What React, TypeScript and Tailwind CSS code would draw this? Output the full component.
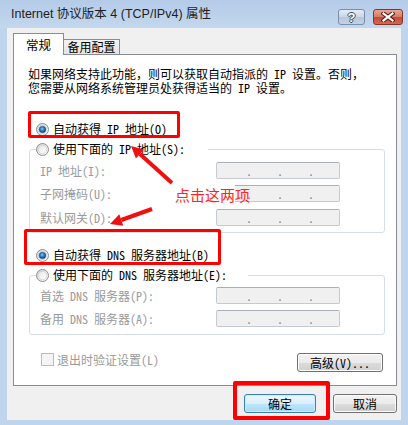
import React from "react";

const cn = "font-['Noto_Sans_Mono_CJK_SC','Noto_Sans_CJK_SC',sans-serif]";

function Radio({ on }: { on?: boolean }) {
  return (
    <svg width="13" height="13" viewBox="0 0 13 13" className="shrink-0">
      <defs>
        <linearGradient id="rOuter" x1="0" y1="0" x2="1" y2="1">
          <stop offset="0" stopColor="#d4d4d4" />
          <stop offset="1" stopColor="#fdfdfd" />
        </linearGradient>
        <linearGradient id="rInner" x1="0" y1="0" x2="1" y2="1">
          <stop offset="0" stopColor="#e6e6e6" />
          <stop offset="1" stopColor="#ffffff" />
        </linearGradient>
        <radialGradient id="rDot" cx="0.45" cy="0.4" r="0.6">
          <stop offset="0" stopColor="#8fd0fa" />
          <stop offset="0.5" stopColor="#2b78c4" />
          <stop offset="1" stopColor="#0d3f7a" />
        </radialGradient>
      </defs>
      <circle cx="6.5" cy="6.5" r="6" fill="url(#rOuter)" stroke="#8e8f8f" strokeWidth="1" />
      <circle cx="6.5" cy="6.5" r="4.2" fill="url(#rInner)" stroke="#c9c9c9" strokeWidth="0.6" />
      {on && <circle cx="6.5" cy="6.5" r="3.3" fill="url(#rDot)" stroke="#1b4f86" strokeWidth="0.5" />}
    </svg>
  );
}

function IpBox() {
  return (
    <div className="flex h-[17px] w-[124px] items-center rounded-[2px] border border-[#c5cad1] border-t-[#abb0b6] bg-[#f0f0f0] text-[12px] leading-none text-[#8a8a8a]">
      <span className="ml-[29px] w-[6px] text-center">.</span>
      <span className="ml-[25px] w-[6px] text-center">.</span>
      <span className="ml-[25px] w-[6px] text-center">.</span>
    </div>
  );
}

function Field({ label, mt }: { label: string; mt: string }) {
  return (
    <div className={`flex h-[17px] items-center pl-[10px] ${mt}`}>
      <span className="w-[176px] shrink-0 text-[#9a9a9a]">{label}</span>
      <IpBox />
    </div>
  );
}

function WinButton({ children, primary, className = "" }: { children: React.ReactNode; primary?: boolean; className?: string }) {
  return (
    <div
      className={`flex h-[19px] items-center justify-center rounded-[3px] border text-[12px] text-black ${
        primary
          ? "border-[#3c7fb1] bg-[linear-gradient(#eaf6fd_0%,#d9f0fc_50%,#bee6fd_50%,#a7d9f5_100%)] shadow-[inset_0_0_0_1px_#c9ecff]"
          : "border-[#707070] bg-[linear-gradient(#f2f2f2_0%,#ebebeb_50%,#dddddd_50%,#cfcfcf_100%)] shadow-[inset_0_0_0_1px_#fcfcfc]"
      } ${className}`}
    >
      {children}
    </div>
  );
}

export default function App() {
  return (
    <div className={`relative flex h-[425px] w-[408px] flex-col overflow-hidden bg-[#bfd4ed] ${cn} text-[12px] text-black`}>
      {/* title bar */}
      <div className="flex h-[28px] shrink-0 bg-[linear-gradient(#b4cbe8,#c3d7ee)] pl-[11px] pr-[5px]">
        <span className="mt-[6px] flex-1 font-['Liberation_Sans','Noto_Sans_CJK_SC',sans-serif] text-[12.5px] leading-[16px] text-[#1e1e1e]">
          Internet 协议版本 4 (TCP/IPv4) 属性
        </span>
        <div className="mt-[9px] flex h-[16px] w-[27px] items-center justify-center rounded-[3px] border border-[#7b8ea8] bg-[linear-gradient(#e4ecf6,#c9d7e8_50%,#b5c7dd_50%,#c3d3e6)]">
          <span className="font-['Liberation_Sans',sans-serif] text-[13px] font-bold leading-none text-white [text-shadow:1px_0_#3d4b63,-1px_0_#3d4b63,0_1px_#3d4b63,0_-1px_#3d4b63]">
            ?
          </span>
        </div>
        <div className="ml-[8px] mt-[9px] flex h-[16px] w-[30px] items-center justify-center rounded-[3px] border border-[#8c3326] bg-[linear-gradient(#e8a595,#d77a68_50%,#c24a36_50%,#cf6a55)]">
          <svg width="14" height="10" viewBox="0 0 14 10">
            <path d="M2.5 1.5 L11.5 8.5 M11.5 1.5 L2.5 8.5" stroke="#5b1e14" strokeWidth="4.2" strokeLinecap="square" />
            <path d="M2.5 1.5 L11.5 8.5 M11.5 1.5 L2.5 8.5" stroke="#ffffff" strokeWidth="2.2" strokeLinecap="square" />
          </svg>
        </div>
      </div>

      {/* dialog body */}
      <div className="mx-[7px] flex h-[392px] shrink-0 flex-col bg-[#f0f0f0] pl-[6px] pr-[4px] pt-[5px]">
        {/* tabs */}
        <div className="flex h-[21px] items-end">
          <div className="relative z-10 -mb-px flex h-[22px] w-[51px] justify-center border-x border-t border-[#898c95] bg-white pt-[3px] text-[12.5px] leading-[16px]">
            常规
          </div>
          <div className="flex h-[15px] w-[56px] items-center justify-center border-r border-t border-[#898c95] bg-[linear-gradient(#f2f2f2,#e4e4e4)] leading-none">
            备用配置
          </div>
        </div>

        {/* tab page */}
        <div className="flex h-[332px] flex-col border border-[#898c95] bg-white pl-[14px] pr-[11px] pt-[12px]">
          <p className="leading-[14px]">
            如果网络支持此功能，则可以获取自动指派的 IP 设置。否则，
            <br />
            您需要从网络系统管理员处获得适当的 IP 设置。
          </p>

          <div className="mt-[26px] flex h-[16px] items-center gap-[4px] pl-[8px]">
            <Radio on />
            <span>自动获得 IP 地址(O)</span>
          </div>

          <div className="ml-[1px] mt-[12px] rounded-[3px] border border-[#d5dfe5] pb-[6px]">
            <div className="ml-[6px] -mt-[9px] flex h-[16px] w-[172px] items-center gap-[4px] bg-white">
              <Radio />
              <span>使用下面的 IP 地址(S):</span>
            </div>
            <Field label="IP 地址(I):" mt="mt-[5px]" />
            <Field label="子网掩码(U):" mt="mt-[6px]" />
            <Field label="默认网关(D):" mt="mt-[7px]" />
          </div>

          <div className="mt-[14px] flex h-[16px] items-center gap-[4px] pl-[8px]">
            <Radio on />
            <span>自动获得 DNS 服务器地址(B)</span>
          </div>

          <div className="ml-[1px] mt-[12px] rounded-[3px] border border-[#d5dfe5] pb-[7px]">
            <div className="ml-[6px] -mt-[9px] flex h-[16px] w-[212px] items-center gap-[4px] bg-white">
              <Radio />
              <span>使用下面的 DNS 服务器地址(E):</span>
            </div>
            <Field label="首选 DNS 服务器(P):" mt="mt-[4px]" />
            <Field label="备用 DNS 服务器(A):" mt="mt-[6px]" />
          </div>

          <div className="mt-[18px] flex items-start justify-between pl-[13px] pr-[2px]">
            <div className="flex h-[13px] items-center gap-[3px]">
              <span className="h-[13px] w-[13px] border border-[#bcbcbc] bg-[#f4f4f4]" />
              <span className="text-[#9a9a9a]">退出时验证设置(L)</span>
            </div>
            <WinButton className="w-[86px]">高级(V)...</WinButton>
          </div>
        </div>

        {/* dialog buttons */}
        <div className="mt-[8px] flex justify-end gap-[17px]">
          <WinButton primary className="w-[72px]">确定</WinButton>
          <WinButton className="w-[64px]">取消</WinButton>
        </div>
      </div>

      {/* annotations */}
      <div className="absolute left-[28px] top-[111px] h-[27px] w-[152px] rounded-[2px] border-[3px] border-[#ff0000]" />
      <div className="absolute left-[24px] top-[229px] h-[36px] w-[197px] rounded-[2px] border-[3px] border-[#ff0000]" />
      <div className="absolute left-[233px] top-[381px] h-[39px] w-[97px] rounded-[2px] border-[4px] border-[#ff0000]" />
      <div className="absolute left-[172px] top-[184px] h-[19px] w-[63px] bg-white" />
      <span className="absolute left-[175px] top-[185px] font-['Noto_Sans_CJK_SC',sans-serif] text-[15px] leading-[20px] text-[#ff2424]">
        点击这两项
      </span>
      <svg className="pointer-events-none absolute left-0 top-0" width="408" height="425" viewBox="0 0 408 425">
        <line x1="172" y1="183" x2="139.9" y2="154" stroke="#f01010" strokeWidth="4" />
        <polygon points="131,146 143.9,149.6 135.9,158.5" fill="#f01010" />
        <line x1="152" y1="209" x2="121.3" y2="220" stroke="#f01010" strokeWidth="4" />
        <polygon points="110,224 123.3,225.7 119.3,214.3" fill="#f01010" />
      </svg>
    </div>
  );
}
